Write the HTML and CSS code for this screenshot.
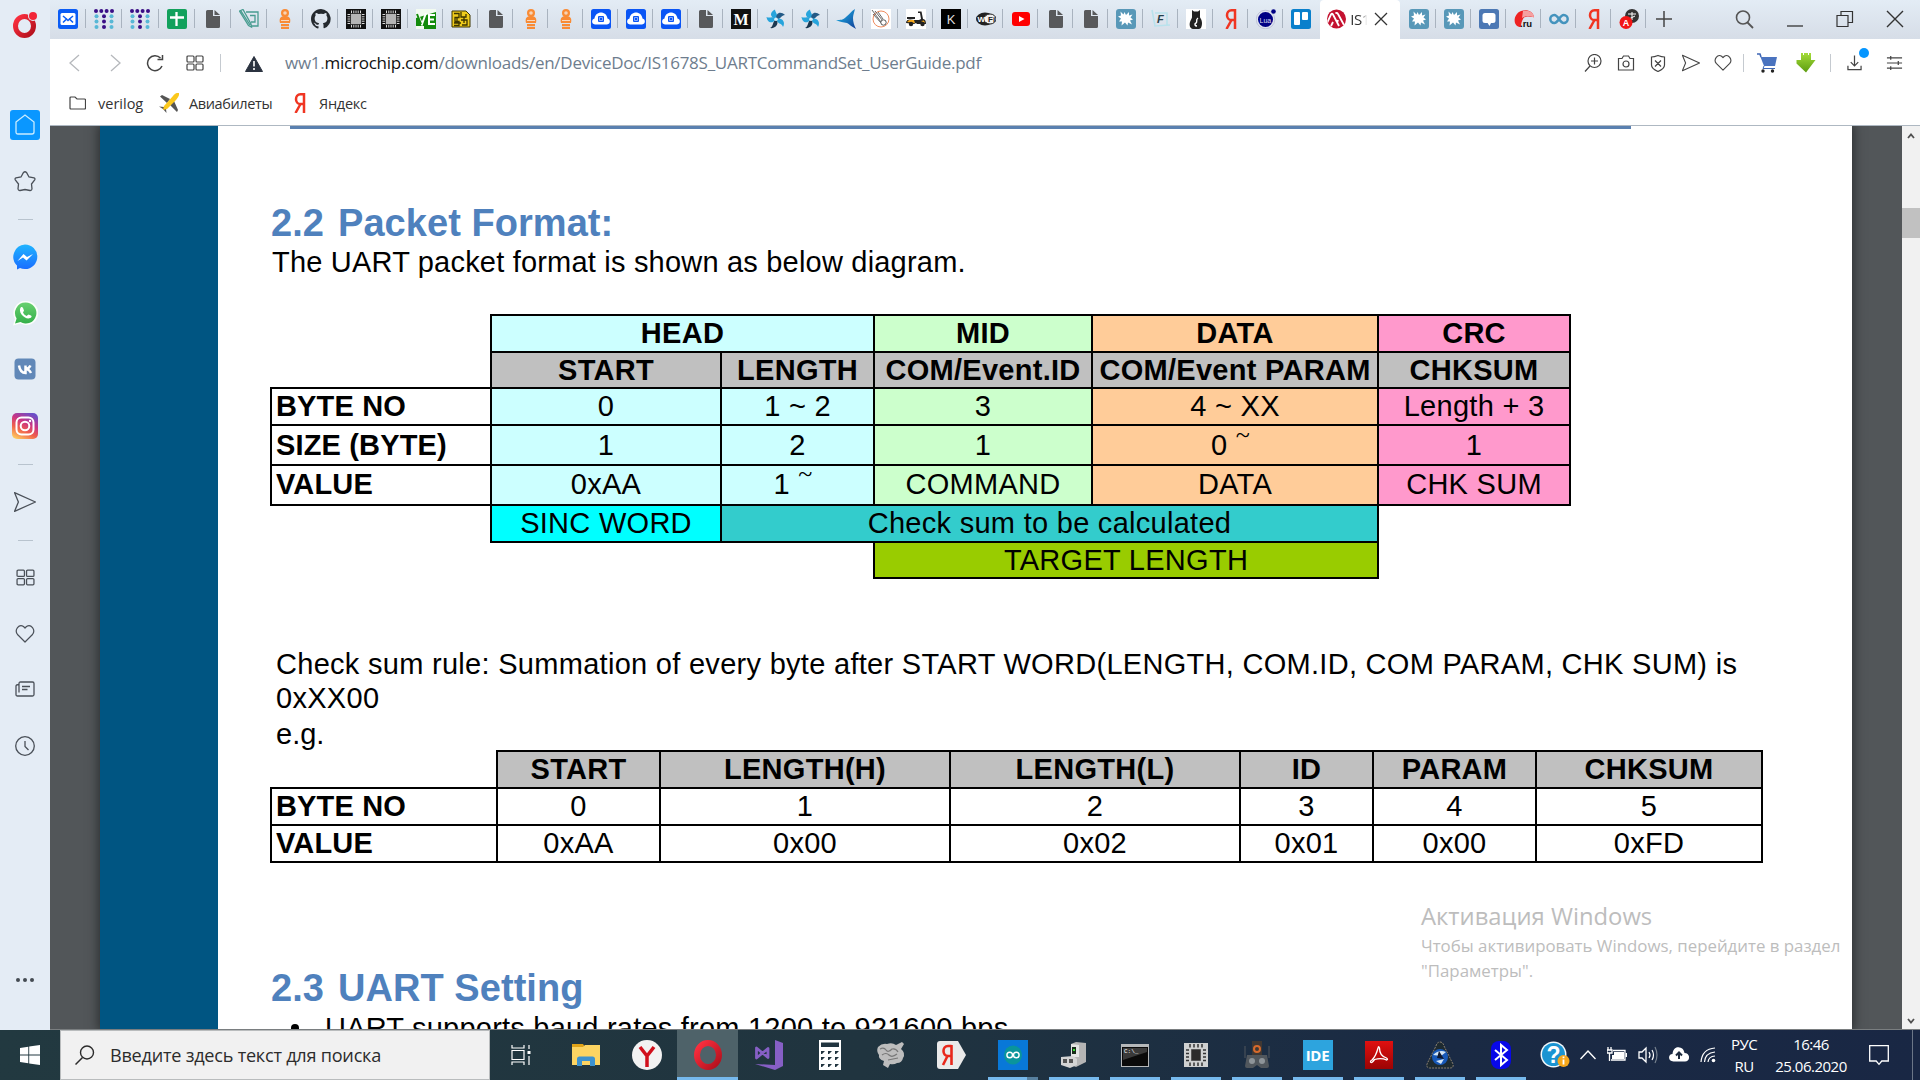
FILE: index.html
```html
<!DOCTYPE html>
<html lang="ru">
<head>
<meta charset="utf-8">
<title>IS1678S_UARTCommandSet_UserGuide.pdf</title>
<link rel="stylesheet" href="styles.css">
</head>
<body>
<svg class="paints" aria-hidden="true">
<defs>
<linearGradient id="g-opera" x1="0" y1="0" x2="1" y2="1"><stop offset="0" stop-color="#ff3040"/><stop offset="1" stop-color="#b0101c"/></linearGradient>
<linearGradient id="g-msg" x1="0" y1="0" x2="0" y2="1"><stop offset="0" stop-color="#1fb4ff"/><stop offset="1" stop-color="#1a6dff"/></linearGradient>
<linearGradient id="g-wa" x1="0" y1="0" x2="0" y2="1"><stop offset="0" stop-color="#68d070"/><stop offset="1" stop-color="#34b04a"/></linearGradient>
<linearGradient id="g-ig" x1=".2" y1="1" x2=".7" y2="0"><stop offset="0" stop-color="#fdc860"/><stop offset=".35" stop-color="#f0604a"/><stop offset=".65" stop-color="#c93485"/><stop offset="1" stop-color="#6a4fc8"/></linearGradient>
<linearGradient id="g-green" x1="0" y1="0" x2="0" y2="1"><stop offset="0" stop-color="#a4dc38"/><stop offset="1" stop-color="#5c9c10"/></linearGradient>
<linearGradient id="g-pdf" x1="0" y1="0" x2="0" y2="1"><stop offset="0" stop-color="#e01010"/><stop offset="1" stop-color="#9c0404"/></linearGradient>
<linearGradient id="g-blade" x1="0" y1="0" x2="1" y2="1"><stop offset="0" stop-color="#1cc0f0"/><stop offset="1" stop-color="#123c96"/></linearGradient>
<clipPath id="c-mchip"><circle cx="9.500" cy="10" r="9.500"/></clipPath>
</defs>
</svg>
<svg class="sprite" aria-hidden="true">
<symbol id="mail" viewBox="0 0 20 20"><rect width="20" height="20" rx="2.5" fill="#0a5cf5"/><rect x="2.5" y="4" width="15" height="12" rx="1.5" fill="#fff"/><path d="M5 7l3.500 3L5 13.500M15 7l-3.500 3 3.500 3.500M8 9.500l2 2 2-2" fill="none" stroke="#0a5cf5" stroke-width="1.500"/></symbol>
<symbol id="dots" viewBox="0 0 20 20"><g fill="#3a0e86"><circle cx="2" cy="2" r="2"/><circle cx="7.300" cy="2" r="2"/><circle cx="12.600" cy="2" r="2"/><circle cx="18" cy="2" r="2"/><circle cx="10" cy="7.300" r="2"/><circle cx="10" cy="12.600" r="2"/><circle cx="10" cy="18" r="2"/></g><g fill="#58b8d6"><circle cx="2.500" cy="7.300" r="2"/><circle cx="2.500" cy="12.600" r="2"/><circle cx="2.500" cy="18" r="2"/><circle cx="17.500" cy="7.300" r="2"/><circle cx="17.500" cy="12.600" r="2"/><circle cx="17.500" cy="18" r="2"/></g></symbol>
<symbol id="sheet" viewBox="0 0 20 20"><rect width="20" height="20" rx="2" fill="#12a15c"/><path d="M3 8.500h14M9.500 3v14" stroke="#fff" stroke-width="2.300"/></symbol>
<symbol id="file" viewBox="0 0 20 20"><path d="M3 2.500Q3 1 4.500 1H10v6h7v10.500q0 1.500-1.500 1.500h-11Q3 19 3 17.500z" fill="#58595b"/><path d="M11.500 1l5.500 5h-5.500z" fill="#58595b"/></symbol>
<symbol id="pcb" viewBox="0 0 20 20"><path d="M.5 2l3.500-1.500 8 14.500.5 3-3-1.500zM7 3h12v14H12M11 6.500h5v6.500h-4M2 2l9 14" fill="none" stroke="#479c90" stroke-width="1.300"/></symbol>
<symbol id="doll" viewBox="0 0 20 20"><circle cx="10" cy="4" r="4" fill="#f98b35"/><path d="M10 7c5 0 6 3 5 7H5c-1-4 0-7 5-7zM6 15h8v2.300H6zM6 18h8v2H6z" fill="#f98b35"/><circle cx="10" cy="4" r="1.800" fill="#f8d3b4"/><path d="M6 11.500h8" stroke="#fbd9bd"/></symbol>
<symbol id="github" viewBox="0 0 16 16"><path fill="#24292e" d="M8 0C3.580 0 0 3.580 0 8c0 3.540 2.290 6.530 5.470 7.590.4.070.55-.17.55-.38v-1.490C3.800 14.200 3.330 12.640 3.330 12.640c-.36-.92-.89-1.170-.89-1.170-.73-.5.060-.49.060-.49.8.060 1.230.82 1.230.82.71 1.220 1.870.87 2.330.66.070-.52.280-.87.500-1.070-1.770-.2-3.640-.89-3.640-3.950 0-.87.310-1.590.82-2.150-.08-.2-.36-1.020.080-2.120 0 0 .67-.21 2.200.82a7.600 7.600 0 014 0c1.530-1.040 2.200-.82 2.200-.82.44 1.100.16 1.920.080 2.120.51.560.82 1.270.82 2.150 0 3.070-1.870 3.750-3.650 3.950.29.250.54.73.54 1.480v2.220c0 .21.150.46.550.38A8 8 0 008 0z"/></symbol>
<symbol id="chip" viewBox="0 0 20 20"><rect width="20" height="20" fill="#111"/><path d="M5.500 1.500v17M7.800 1.500v17M10 1.500v17M12.200 1.500v17M14.500 1.500v17M1.500 5.500h17M1.500 7.800h17M1.500 10h17M1.500 12.200h17M1.500 14.500h17" stroke="#ddd" stroke-width="1"/><rect x="4.500" y="4.500" width="11" height="11" fill="#b5b5b5" stroke="#222" stroke-width=".8"/></symbol>
<symbol id="ve" viewBox="0 0 20 20"><rect width="20" height="20" fill="#138b0c"/><path d="M0 0h20v3L10 6 0 9zM0 17h8v3H0z" fill="#f2fbf0"/><path d="M2 6l4 9 4-11M19 6h-6v9h6M13 10.500h5" stroke="#fff" stroke-width="2" fill="none"/><path d="M1 5l4 10" stroke="#138b0c" stroke-width="2" fill="none"/></symbol>
<symbol id="yel" viewBox="0 0 20 20"><path d="M1 2h14l4 4v12H1z" fill="#f0cc1c" stroke="#3d3500"/><path d="M3 4.500h5v4H4v4h4v4H3M10 3v5h5V5M10 11h6v5h-5M6 8v6M13 8v6M3 14h7" stroke="#3d3500" fill="none" stroke-width="1.300"/></symbol>
<symbol id="cloudb" viewBox="0 0 20 20"><rect width="20" height="20" rx="2.500" fill="#0a55f5"/><path d="M4 15.500c-4-.5-3.500-5.500-.5-6C4 5 8 3.500 10 3.500S16 5 16.500 9.500c3 .5 3.500 5.500-.5 6z" fill="#fff"/><rect x="7" y="7" width="6" height="6" rx="1" fill="#0a55f5"/><path d="M8.500 8.500h3v3h-3z" stroke="#bcd0ff" fill="none" stroke-width=".7"/></symbol>
<symbol id="med" viewBox="0 0 20 20"><rect width="20" height="20" fill="#111"/><text x="10" y="15.500" text-anchor="middle" font-family="Liberation Serif" font-weight="bold" font-size="16" fill="#fff">M</text></symbol>
<symbol id="swirl" viewBox="0 0 20 20"><g fill="#27a4dc"><path d="M10 10C3 8 4 3 9 .5c0 3 4 5 1 9.500z"/><path d="M10 10c0-7 5-8 9-4-4 0-4 5-9 4z" fill="#245a86"/><path d="M10 10c6-2 10 3 7 8-1-4-6-3-7-8z"/><path d="M10 10c4 5-1 10-6 9 4-2 2-6 6-9z" fill="#1b3850"/><path d="M10 10c-4 6-9 3-9.500-2 4 2 5-2 9.500 2z"/></g><circle cx="10" cy="10.200" r="1.800" fill="#d8edf7"/></symbol>
<symbol id="blade" viewBox="0 0 20 20"><path d="M19 0c-1 4-2 6-2 9 0 4 1 7 3 11-4-2-7-5-9-6-4-1-7-1-11-3 5 0 7 0 10-3 4-3 5-6 9-8z" fill="url(#g-blade)"/></symbol>
<symbol id="sketch" viewBox="0 0 20 20"><rect width="20" height="20" fill="#fff"/><circle cx="10" cy="10" r="8" fill="none" stroke="#ef8d60"/><path d="M1 1l9 12M4 2l8 10M7 3l5 7M2 5l9 10" stroke="#555" stroke-width=".9"/><circle cx="12.500" cy="13.500" r="2.700" fill="#fff" stroke="#555"/></symbol>
<symbol id="scoot" viewBox="0 0 20 20"><rect width="20" height="20" fill="#fff"/><path d="M1 8h8v2H1zM0 14c0-4 4-4 8-3h5l2-1-1-6h-2V2.500h3.500L17 10c3 0 3 4 3 5h-9l-1-1-2 1z" fill="#222"/><path d="M1 13l2-2h5l1 3zM15 12l3-.5 1 2.500z" fill="#f5a81c"/><circle cx="5" cy="15" r="2.200" fill="#222"/><circle cx="16.500" cy="15" r="2.200" fill="#222"/></symbol>
<symbol id="kk" viewBox="0 0 20 20"><rect width="20" height="20" fill="#000"/><text x="10" y="14.500" text-anchor="middle" font-family="Liberation Sans" font-size="13" fill="#ddd">K</text></symbol>
<symbol id="wifi" viewBox="0 0 20 20"><ellipse cx="9" cy="10" rx="9" ry="6.500" fill="#222"/><ellipse cx="14" cy="10" rx="6" ry="5" fill="#eee" stroke="#222"/><text x="1.500" y="13" font-family="Liberation Sans" font-weight="bold" font-size="8" fill="#fff">Wi</text><text x="12" y="13" font-family="Liberation Sans" font-weight="bold" font-size="8" fill="#222">Fi</text></symbol>
<symbol id="yt" viewBox="0 0 20 20"><rect x="1" y="3" width="18" height="14" rx="3" fill="#f00"/><path d="M8 7v6l5.500-3z" fill="#fff"/></symbol>
<symbol id="splat" viewBox="0 0 20 20"><rect width="20" height="20" rx="3" fill="#5898b8"/><path d="M8.500 3l1.500 3 3-3v3.500l3.500-1-2 3 2.500 2-3 1 2 4-4-2-.5 3-2.500-3-3.500 3 .5-4-3 0 2-3-3-2 3-1-.5-4 3 3z" fill="#fff"/></symbol>
<symbol id="ff" viewBox="0 0 20 20"><path d="M1 1l3 16 15-1M4 4h12v12" fill="none" stroke="#b9e2ec" stroke-width="1.600"/><text x="6" y="13.500" font-family="Liberation Sans" font-weight="bold" font-style="italic" font-size="11" fill="#26404a">F</text></symbol>
<symbol id="cat" viewBox="0 0 20 20"><rect width="20" height="20" fill="#fff"/><path d="M6 1l2 1.500h4L14 1v6c-.5 2 2 3 2 7 0 3-1 6-3 6H7c-3 0-4-4-3-7 .5-2 2.500-4 2-6z" fill="#222"/><path d="M12 9c-3 2 0 4-2 5s-1 3 1 3" stroke="#fff" fill="none" stroke-width="1.400"/></symbol>
<symbol id="ya" viewBox="0 0 20 20"><path d="M14 0v20M14 1.300h-3.500C4.500 1.300 4.500 11 10.500 11H14M10.500 11L5.500 20" fill="none" stroke="#f03522" stroke-width="2.500"/></symbol>
<symbol id="lua" viewBox="0 0 20 20"><circle cx="9.500" cy="10.500" r="9.300" fill="#dfe3ef" stroke="#a5a9c4" stroke-width=".5"/><circle cx="9.500" cy="10.500" r="7.500" fill="#000084"/><circle cx="17.500" cy="2.500" r="2.300" fill="#000084"/><text x="3.500" y="14" font-family="Liberation Sans" font-size="7" fill="#dde">Lua</text></symbol>
<symbol id="trello" viewBox="0 0 20 20"><rect width="20" height="20" rx="2.500" fill="#0a80cc"/><rect x="3" y="3" width="6" height="13" rx="1" fill="#fff"/><rect x="11" y="3" width="6" height="8" rx="1" fill="#fff"/></symbol>
<symbol id="mchip" viewBox="0 0 20 20"><circle cx="9.500" cy="10" r="9.500" fill="#c41230"/><g clip-path="url(#c-mchip)" stroke="#fff" stroke-width="1.800" fill="none"><path d="M0 14L4 5.500Q5 4 6 5.500L12 17M8.500 4.500Q10 3 11 5L17 16M4 17l2-4M10 14l1-3"/></g></symbol>
<symbol id="chat" viewBox="0 0 20 20"><rect width="20" height="20" rx="2.500" fill="#4c78b4"/><rect x="3.500" y="4" width="13" height="10" rx="2.500" fill="#fff"/><path d="M8 13l2.500 4 2-4z" fill="#fff"/></symbol>
<symbol id="ru" viewBox="0 0 20 20"><path d="M7 18C-2 18-1 5 7 2c6-2 12 0 13 6-5-1-10-1-11 2-1 2-2 4-2 8z" fill="#e22"/><path d="M9 2c6-1 11 1 11 7-4-3-9-2-12 0z" fill="#f5a0a0"/><text x="6" y="18" font-family="Liberation Sans" font-weight="bold" font-size="9.500" fill="#111">.ru</text></symbol>
<symbol id="inf" viewBox="0 0 20 20"><path d="M10 10C8 7 7 6 5.300 6a4 4 0 000 8C7 14 8 13 10 10s3-4 4.700-4a4 4 0 010 8C13 14 12 13 10 10z" fill="none" stroke="#4493bd" stroke-width="2.500"/></symbol>
<symbol id="trans" viewBox="0 0 20 20"><circle cx="13" cy="7" r="7" fill="#333"/><path d="M9 5h8M13 3v8M10 10l6-3" stroke="#fff"/><circle cx="7" cy="13.500" r="6.500" fill="#f21515"/><text x="7" y="17" text-anchor="middle" font-family="Liberation Sans" font-weight="bold" font-size="9" fill="#fff">A</text></symbol>
<symbol id="grid4" viewBox="0 0 18 18"><g fill="none" stroke="currentColor" stroke-width="1.200"><rect x="1" y="2" width="7" height="6" rx="1"/><rect x="10" y="2" width="7" height="6" rx="1"/><rect x="1" y="10" width="7" height="6" rx="1"/><rect x="10" y="10" width="7" height="6" rx="1"/></g></symbol>
<symbol id="heart" viewBox="0 0 20 20"><path d="M10 18L2.500 10.500C-1 6 4-.5 8.500 2.500L10 4l1.500-1.500C16-.5 21 6 17.500 10.500z" fill="none" stroke="currentColor" stroke-width="1.200" stroke-linejoin="round"/></symbol>
<symbol id="send" viewBox="0 0 20 20"><path d="M0.500 1.500L19.500 10 0.500 18.500 4 10z" fill="none" stroke="currentColor" stroke-width="1.200" stroke-linejoin="round"/></symbol>
<symbol id="lens" viewBox="0 0 20 20"><circle cx="12" cy="7.500" r="6.500" fill="none" stroke="currentColor" stroke-width="1.400"/><path d="M7.500 12.500L.5 19.500" stroke="currentColor" stroke-width="1.500"/></symbol>
</svg>

<div class="screen">
<aside class="side">
  <div class="slot logo"><svg width="25" height="26" viewBox="0 0 25 26"><ellipse cx="11.500" cy="14" rx="9" ry="9.500" fill="none" stroke="url(#g-opera)" stroke-width="5"/><circle cx="20" cy="4" r="5" fill="#e4ecf5"/><circle cx="20" cy="4" r="4" fill="#f22537"/></svg></div>
  <div class="slot"><div class="home"><svg width="20" height="22" viewBox="0 0 20 22"><path d="M1 8L10 1l9 7v10q0 2-2 2H3q-2 0-2-2z" fill="none" stroke="#c9ecff" stroke-width="1.300"/></svg></div></div>
  <div class="slot"><svg width="22" height="21" viewBox="0 0 22 21"><path d="M9.500 1.500q1.500-1.500 3 0L15 6l5 .8q1.500.7.7 2L17.500 13l.5 5q-.3 1.700-2 1.500L11 18.500 6 19.500q-1.700.2-2-1.500l.5-5L1.300 8.800q-.8-1.300.7-2L7 6z" fill="none" stroke="currentColor" stroke-width="1.300"/></svg></div>
  <div class="rule"></div>
  <div class="slot"><svg width="26" height="26" viewBox="0 0 26 26"><path d="M13 .5a12.300 12.300 0 110 24.600q-3 0-5-1L5 25.500v-4A12.300 12.300 0 0113 .5z" fill="url(#g-msg)"/><path d="M5.500 17l6-7 3.500 3 6-3-6.500 6.500-3.500-3z" fill="#fff"/></svg></div>
  <div class="slot"><svg width="26" height="26" viewBox="0 0 26 26"><path d="M13.500 1a12 12 0 11-5 22.500L1 25.500l2-6.500A12 12 0 0113.500 1z" fill="#fbfefb"/><path d="M13.500 2.500a10.500 10.500 0 11-5 19.500L3 23.500l1.600-5A10.500 10.500 0 0113.500 2.500z" fill="url(#g-wa)"/><path d="M9 7c2-.5 2.500 2 3 3.500l-1 2c1 2 2 2.500 3.500 3.500l2-1.500c2 .5 3.500 1 3 2.500-4 5-15-4-10.500-10z" fill="#fff"/></svg></div>
  <div class="slot"><svg width="22" height="22" viewBox="0 0 22 22"><rect x=".5" y=".5" width="21" height="21" rx="4" fill="#6188b8"/><path d="M5 7.500c.8 5 3 7.500 6.500 7.500V7.500M11.500 11c3 0 4-1.500 5-3.500M11.500 11c3 0 4.500 2 5.500 4" fill="none" stroke="#fff" stroke-width="2.500"/></svg></div>
  <div class="slot"><svg width="26" height="26" viewBox="0 0 26 26"><rect width="26" height="26" rx="5" fill="url(#g-ig)"/><rect x="4.500" y="4.500" width="17" height="17" rx="5" fill="none" stroke="#fff" stroke-width="2"/><circle cx="13" cy="13" r="4.300" fill="none" stroke="#fff" stroke-width="2"/><circle cx="18" cy="8" r="1.200" fill="#fff"/></svg></div>
  <div class="rule"></div>
  <div class="slot"><svg width="22" height="22"><use href="#send"/></svg></div>
  <div class="rule"></div>
  <div class="slot"><svg width="19" height="19"><use href="#grid4"/></svg></div>
  <div class="slot"><svg width="20" height="20"><use href="#heart"/></svg></div>
  <div class="slot"><svg width="20" height="18" viewBox="0 0 20 18"><path d="M4 3v-.5Q4 1 5.500 1h12Q19 1 19 2.500v11q0 1.500-1.500 1.500h-15Q1 15 1 13.500V5q0-1.500 3-1.500v8M7 5.500h8M7 8.500h5.500" fill="none" stroke="currentColor" stroke-width="1.300"/></svg></div>
  <div class="slot"><svg width="20" height="20" viewBox="0 0 20 20"><circle cx="10" cy="10" r="9.300" fill="none" stroke="currentColor" stroke-width="1.300"/><path d="M10 5v5.500l3.500 3.500" fill="none" stroke="currentColor" stroke-width="1.300"/></svg></div>
  <div class="more"><i></i><i></i><i></i></div>
</aside>

<div class="main">
<header class="tabs">
  <div class="tab w"><svg><use href="#mail"/></svg></div><div class="tab w"><svg><use href="#dots"/></svg></div><div class="tab w"><svg><use href="#dots"/></svg></div><div class="tab w"><svg><use href="#sheet"/></svg></div><div class="tab w"><svg><use href="#file"/></svg></div><div class="tab w"><svg><use href="#pcb"/></svg></div><div class="tab w"><svg><use href="#doll"/></svg></div>
  <div class="tab"><svg><use href="#github"/></svg></div><div class="tab"><svg><use href="#chip"/></svg></div><div class="tab"><svg><use href="#chip"/></svg></div><div class="tab"><svg><use href="#ve"/></svg></div><div class="tab"><svg><use href="#yel"/></svg></div><div class="tab"><svg><use href="#file"/></svg></div><div class="tab"><svg><use href="#doll"/></svg></div><div class="tab"><svg><use href="#doll"/></svg></div><div class="tab"><svg><use href="#cloudb"/></svg></div><div class="tab"><svg><use href="#cloudb"/></svg></div><div class="tab"><svg><use href="#cloudb"/></svg></div><div class="tab"><svg><use href="#file"/></svg></div><div class="tab"><svg><use href="#med"/></svg></div><div class="tab"><svg><use href="#swirl"/></svg></div><div class="tab"><svg><use href="#swirl"/></svg></div><div class="tab"><svg><use href="#blade"/></svg></div><div class="tab"><svg><use href="#sketch"/></svg></div><div class="tab"><svg><use href="#scoot"/></svg></div><div class="tab"><svg><use href="#kk"/></svg></div><div class="tab"><svg><use href="#wifi"/></svg></div><div class="tab"><svg><use href="#yt"/></svg></div><div class="tab"><svg><use href="#file"/></svg></div><div class="tab"><svg><use href="#file"/></svg></div><div class="tab"><svg><use href="#splat"/></svg></div><div class="tab"><svg><use href="#ff"/></svg></div><div class="tab"><svg><use href="#cat"/></svg></div><div class="tab"><svg><use href="#ya"/></svg></div><div class="tab"><svg><use href="#lua"/></svg></div><div class="tab last"><svg><use href="#trello"/></svg></div>
  <div class="tab active"><svg><use href="#mchip"/></svg><span class="tab-title">IS1</span><svg class="x" viewBox="0 0 14 14"><path d="M1 1l12 12M13 1L1 13" stroke="#333" stroke-width="1.300"/></svg></div>
  <div class="tab"><svg><use href="#splat"/></svg></div><div class="tab"><svg><use href="#splat"/></svg></div><div class="tab"><svg><use href="#chat"/></svg></div><div class="tab"><svg><use href="#ru"/></svg></div><div class="tab"><svg><use href="#inf"/></svg></div><div class="tab"><svg><use href="#ya"/></svg></div><div class="tab"><svg><use href="#trans"/></svg></div>
  <div class="tab last"><svg class="plus" viewBox="0 0 16 16"><path d="M8 0v16M0 8h16" stroke="#444" stroke-width="1.500"/></svg></div>
  <div class="win">
    <svg width="19" height="19" viewBox="0 0 19 19"><circle cx="8" cy="7.500" r="6.500" fill="none" stroke="#555" stroke-width="1.600"/><path d="M12.500 12.500l5.500 5.500" stroke="#555" stroke-width="1.800"/></svg>
    <svg width="18" height="18" viewBox="0 0 18 18"><path d="M1 16h16" stroke="#333" stroke-width="1.300"/></svg>
    <svg width="18" height="18" viewBox="0 0 18 18"><path d="M1 5.500h11v11H1zM5 5.500v-4h11.500v11H12" fill="none" stroke="#333" stroke-width="1.200"/></svg>
    <svg width="18" height="18" viewBox="0 0 18 18"><path d="M1 1l16 16M17 1L1 17" stroke="#333" stroke-width="1.400"/></svg>
  </div>
</header>

<div class="toolbar">
  <div class="nav">
    <svg class="pale" viewBox="0 0 18 18"><path d="M13 1L4 9l9 8" fill="none" stroke="currentColor" stroke-width="1.300"/></svg>
    <svg class="pale" viewBox="0 0 18 18"><path d="M5 1l9 8-9 8" fill="none" stroke="currentColor" stroke-width="1.300"/></svg>
    <svg viewBox="0 0 18 18"><path d="M16 12A7.500 7.500 0 1114.500 4M16.500 1v4.500h-5" fill="none" stroke="currentColor" stroke-width="1.500"/></svg>
    <svg viewBox="0 0 18 18"><use href="#grid4"/></svg>
  </div>
  <i class="vr first"></i>
  <svg class="warn" viewBox="0 0 18 16"><path d="M9 .5L17.500 15.500H.5z" fill="#2b3340" stroke="#2b3340" stroke-linejoin="round"/><path d="M9 5v5.500M9 12v2" stroke="#fff" stroke-width="1.600"/></svg>
  <div class="url">ww1.<b>microchip.com</b>/downloads/en/DeviceDoc/IS1678S_UARTCommandSet_UserGuide.pdf</div>
  <div class="tools">
    <svg viewBox="0 0 18 18"><circle cx="10.500" cy="7" r="6.500" fill="none" stroke="currentColor" stroke-width="1.200"/><path d="M6 12L1 17.500M7 7h7M10.500 3.500v7" stroke="currentColor" stroke-width="1.200"/></svg>
    <svg viewBox="0 0 18 18"><path d="M1.500 4.500H5L6.500 2h5L13 4.500h3.500v11.500h-15z" fill="none" stroke="currentColor" stroke-width="1.200"/><circle cx="9" cy="10" r="3" fill="none" stroke="currentColor" stroke-width="1.200"/></svg>
    <svg viewBox="0 0 18 18"><path d="M9 1.500c2.500 1 4 1.500 6.500 1.500v8c0 3-3 5-6.500 6.500C5.500 16 2.500 14 2.500 11V3C5 3 6.500 2.500 9 1.500zM6 6.500l6 6M12 6.500l-6 6" fill="none" stroke="currentColor" stroke-width="1.200"/></svg>
    <svg viewBox="0 0 18 18"><use href="#send"/></svg>
    <svg viewBox="0 0 18 18"><use href="#heart"/></svg>
  </div>
  <i class="vr"></i>
  <svg class="cart" viewBox="0 0 20 20"><path d="M0 1h3l1 3" stroke="#3f67b5" fill="none" stroke-width="1.600"/><path d="M3.500 4H20l-2 9H7z" fill="#4a73bf"/><path d="M7 13l-1 2.500h12" stroke="#3f67b5" fill="none"/><circle cx="6" cy="18" r="1.700" fill="#222"/><circle cx="15.500" cy="18" r="1.700" fill="#222"/></svg>
  <svg class="green" viewBox="0 0 20 20"><path d="M5 0h2v2h1V0h4v2h1V0h2v7h4.500L10 19.500.5 10.500V7H5z" fill="url(#g-green)"/></svg>
  <i class="vr"></i>
  <div class="dl"><svg viewBox="0 0 16 16"><path d="M8 0v11M4 7l4 4 4-4M1 11v4h14v-4" fill="none" stroke="#444" stroke-width="1.300"/></svg><i></i></div>
  <svg class="set" viewBox="0 0 18 16"><path d="M1 2.500h16M1 8h16M1 13.500h16M5 .5v4M13 6v4M5 11.500v4M9 0" stroke="#444" stroke-width="1.300"/></svg>
</div>
<div class="marks">
  <svg class="folder" viewBox="0 0 17 14"><path d="M1 2Q1 1 2 1h4l2 2h7.500q1 0 1 1v8q0 1-1 1H2q-1 0-1-1z" fill="none" stroke="#444" stroke-width="1.200"/></svg><span class="m1">verilog</span>
  <svg class="ic" viewBox="0 0 20 20"><path d="M1 3.500L3 2l8 4-3 4zM18 19l1-2-4-9-4 4zM0 13.500l5 .5 2 2 .5 4L4 16z" fill="#555"/><path d="M20 0c-2-.5-4 .5-6 3L5 13l-1 4 4-1 9-9c2.500-3 3.500-5 3-7z" fill="#fbc81c"/></svg><span class="m2">Авиабилеты</span>
  <svg class="ic" viewBox="0 0 20 20"><use href="#ya"/></svg><span class="m3">Яндекс</span>
</div>

<main class="viewer">
  <div class="page">
    <div class="band"></div>
    <div class="doc">
      <div class="topline"></div>
      <h2 class="h22"><span>2.2</span>Packet Format:</h2>
      <p class="intro">The UART packet format is shown as below diagram.</p>
      <table class="t1">
        <colgroup><col class="a0"><col class="a1"><col class="a2"><col class="a3"><col class="a4"><col class="a5"></colgroup>
        <tr class="r37"><td class="none"></td><th class="cy" colspan="2">HEAD</th><th class="gr">MID</th><th class="or">DATA</th><th class="pk">CRC</th></tr>
        <tr class="r36 hd"><td class="none"></td><th>START</th><th>LENGTH</th><th>COM/Event.ID</th><th>COM/Event PARAM</th><th>CHKSUM</th></tr>
        <tr class="r37"><th class="lab">BYTE NO</th><td class="cy">0</td><td class="cy">1 ~ 2</td><td class="gr">3</td><td class="or">4 ~ XX</td><td class="pk">Length + 3</td></tr>
        <tr class="r40"><th class="lab">SIZE (BYTE)</th><td class="cy">1</td><td class="cy">2</td><td class="gr">1</td><td class="or open">0 <span class="tl">~</span></td><td class="pk">1</td></tr>
        <tr class="r40 up"><th class="lab">VALUE</th><td class="cy">0xAA</td><td class="cy open">1 <span class="tl">~</span></td><td class="gr">COMMAND</td><td class="or">DATA</td><td class="pk">CHK SUM</td></tr>
        <tr class="r37"><td class="none"></td><td class="aqua">SINC WORD</td><td class="teal" colspan="3">Check sum to be calculated</td><td class="none"></td></tr>
        <tr class="r36"><td class="none" colspan="3"></td><td class="lime" colspan="2">TARGET LENGTH</td><td class="none"></td></tr>
      </table>
      <p class="rule1">Check sum rule: Summation of every byte after START WORD(LENGTH, COM.ID, COM PARAM, CHK SUM) is<br>0xXX00</p>
      <p class="eg">e.g.</p>
      <table class="t2">
        <colgroup><col class="b0"><col class="b1"><col class="b2"><col class="b2"><col class="b3"><col class="b4"><col class="b5"></colgroup>
        <tr class="r37 hd"><td class="none"></td><th>START</th><th>LENGTH(H)</th><th>LENGTH(L)</th><th>ID</th><th>PARAM</th><th>CHKSUM</th></tr>
        <tr class="r37"><th class="lab">BYTE NO</th><td>0</td><td>1</td><td>2</td><td>3</td><td>4</td><td>5</td></tr>
        <tr class="r37"><th class="lab">VALUE</th><td>0xAA</td><td>0x00</td><td>0x02</td><td>0x01</td><td>0x00</td><td>0xFD</td></tr>
      </table>
      <h2 class="h23"><span>2.3</span>UART Setting</h2>
      <p class="li"><i></i>UART supports baud rates from 1200 to 921600 bps</p>
    </div>
  </div>
  <div class="scroll">
    <svg viewBox="0 0 8 6"><path d="M1 5l3-3.500L7 5" fill="none" stroke="#505050" stroke-width="1.800"/></svg>
    <div class="thumb"></div>
    <svg viewBox="0 0 8 6"><path d="M1 1l3 3.500L7 1" fill="none" stroke="#505050" stroke-width="1.800"/></svg>
  </div>
  <div class="watermark"><div class="wm1">Активация Windows</div><div class="wm2">Чтобы активировать Windows, перейдите в раздел</div><div class="wm3">"Параметры".</div></div>
</main>
</div>

<footer class="task">
  <div class="start"><svg width="20" height="20" viewBox="0 0 20 20"><path d="M0 3l8.300-1.200V9.500H0zM9.200 1.600L20 0v9.500H9.200zM0 10.500h8.300v7.800L0 17zM9.200 10.500H20V20L9.200 18.400z" fill="#fff"/></svg></div>
  <div class="search"><svg width="20" height="20"><use href="#lens"/></svg><span>Введите здесь текст для поиска</span></div>
  <div class="app tv"><svg width="21" height="20" viewBox="0 0 21 20"><path d="M1 0v3h12V0M1 20v-3h12v3M1 5.500h12v9H1zM18 0v4M18 11v9" fill="none" stroke="#fff" stroke-width="1.200"/><path d="M16.500 6h3v3h-3z" fill="#fff"/></svg></div>
  <div class="app"><svg width="28" height="24" viewBox="0 0 28 24"><path d="M0 1h11l2 3H0z" fill="#e0a318"/><path d="M0 4h11l2-2h15v20H0z" fill="#fcd462"/><path d="M5 23v-7q0-2.500 2.500-2.500h13Q23 13.500 23 16v7h-5v-5h-8v5z" fill="#3d92cf"/></svg></div>
  <div class="app"><svg width="30" height="30" viewBox="0 0 30 30"><circle cx="15" cy="15" r="15" fill="#f2f2f2"/><path d="M8 7l7 9 7-9M15 15v12" fill="none" stroke="#d1101c" stroke-width="3.500"/></svg></div>
  <div class="app on run"><svg width="30" height="30" viewBox="0 0 30 30"><ellipse cx="15" cy="15" rx="11" ry="12" fill="none" stroke="url(#g-opera)" stroke-width="6"/></svg></div>
  <div class="app"><svg width="30" height="30" viewBox="0 0 30 30"><path d="M21 0l8 3v23l-8 4L1 24l20 1z" fill="#865fc5"/><path d="M2.500 8v10L14 8.500v9z" fill="none" stroke="#865fc5" stroke-width="2.800" stroke-linejoin="round"/></svg></div>
  <div class="app"><svg width="22" height="30" viewBox="0 0 22 30"><path d="M0 0h22v30H0z" fill="#fff"/><path d="M2 2.500h18v4.500H2z" fill="#21343f"/><g fill="#21343f"><path d="M2 11h4l-3 3H2zM9 11h4l-3 3H9zM16 11h4l-3 3h-1zM2 17h4l-3 3H2zM9 17h4l-3 3H9zM16 17h4l-3 3h-1zM2 24h4l-3 3H2zM9 24h4l-3 3H9zM16 24h4l-3 3h-1z"/></g></svg></div>
  <div class="app"><svg width="30" height="26" viewBox="0 0 30 26"><path d="M2 5q4-4 9-3 5-2 9 1l6-3 2 2-3 5q5 4 2 9-1 5-6 5-3 2-7 1l-2 4-5-3 1-4Q2 17 3 13 0 9 2 5z" fill="#bdbdbd"/><path d="M4 7q4-2 6 1t6-1q4-1 6 3M6 13q4-3 7 0t8-1M12 18l10-2" fill="none" stroke="#777" stroke-width="1.200"/></svg></div>
  <div class="app"><svg width="29" height="28" viewBox="0 0 29 28"><path d="M3 0h18l8 14-8 14H3q-3 0-3-3V3q0-3 3-3z" fill="#eaeaea"/><path d="M14.500 4v20M14.500 5H11c-6 0-6 10 0 10h3.500M10.500 15L6 24" fill="none" stroke="#e8281c" stroke-width="2.600"/></svg></div>
  <div class="app run multi"><svg width="30" height="30" viewBox="0 0 30 30"><path d="M0 0h30v30H0z" fill="#0878d8"/><ellipse cx="15" cy="15" rx="9" ry="9.500" fill="#0a959c"/><circle cx="11.700" cy="15" r="2.800" fill="none" stroke="#fff" stroke-width="1.400"/><circle cx="18.300" cy="15" r="2.800" fill="none" stroke="#fff" stroke-width="1.400"/></svg></div>
  <div class="app run"><svg width="28" height="26" viewBox="0 0 28 26"><path d="M11 2l5-2 10 1v19l-10 5-5-2z" fill="#b5b5b5"/><path d="M11 2l8 1v12h-8z" fill="#e4e4e4"/><path d="M12 5h4v7h-4z" fill="#182c18"/><path d="M13 7h2v2h-2z" fill="#38e038"/><path d="M1 15l12-1 4 3v6l-7 3-9-3z" fill="#d4d4d4"/><path d="M3 17h4v4H3zM9 17h4v4H9z" fill="#555"/></svg></div>
  <div class="app run"><svg width="28" height="23" viewBox="0 0 28 23"><path d="M0 0h28v23H0z" fill="#b5b8ba"/><path d="M1 3h26v19H1z" fill="#0a0a0a"/><path d="M2 4h24v4L2 16z" fill="#3a3a3a"/><text x="3" y="9" font-family="Liberation Mono" font-size="6" fill="#fff">C:\_</text></svg></div>
  <div class="app run"><svg width="24" height="24" viewBox="0 0 24 24"><path d="M0 0h24v24H0z" fill="#cfd1d1"/><path d="M7.500 6.500h9v11h-9z" fill="#2c2c2c" stroke="#555"/><path d="M6 1v3.500M10 1v3.500M14 1v3.500M18 1v3.500M6 19.500v3.500M10 19.500v3.500M14 19.500v3.500M18 19.500v3.500M2 7h3M2 10.500h3M2 14h3M2 17.500h3M19 7h3M19 10.500h3M19 14h3M19 17.500h3" stroke="#333" stroke-width="1.500"/></svg></div>
  <div class="app run"><svg width="26" height="28" viewBox="0 0 26 28"><path d="M8 0h10v14H8z" fill="#403833"/><circle cx="13" cy="8" r="3" fill="none" stroke="#d76a2c" stroke-width="2"/><path d="M1 5v12M25 5v12" stroke="#51575d"/><path d="M3 14h20l2 11q0 2-2 2h-6l-4-3-4 3H3q-2 0-2-2z" fill="#51575d"/><circle cx="8" cy="20" r="3" fill="#8e9499"/><circle cx="18" cy="20" r="3" fill="#8e9499"/></svg></div>
  <div class="app run"><div class="ide">IDE</div></div>
  <div class="app run"><svg width="28" height="28" viewBox="0 0 28 28"><path d="M0 0h28v28H0z" fill="url(#g-pdf)"/><path d="M6 21.500q-1.500-1 1-2.500 4-4 6-12 .5-2.500 1.500 0 0 8 7 10 2 1.500 0 2-5-2.500-12-.5-2.500 3.500-3.500 3z" fill="none" stroke="#fff" stroke-width="1.300"/></svg></div>
  <div class="app run"><svg width="28" height="28" viewBox="0 0 28 28"><path d="M14 1q3 0 4 4l9 18q1 4-3 4H4q-4 0-3-4L10 5q1-4 4-4z" fill="#1e2a30" stroke="#8b8172" stroke-dasharray="2 1"/><circle cx="14" cy="16" r="8" fill="#1758b8"/><path d="M7 14q6-6 13-3l-5 4zM10 20l8-2-3 5z" fill="#d2e4f5"/><path d="M13 10l5 8-7-1z" fill="#111a30"/></svg></div>
  <div class="app run"><svg width="20" height="28" viewBox="0 0 20 28"><rect width="20" height="28" rx="8" fill="#0808e8"/><path d="M4 9l12 10-6 5V4l6 5L4 19" fill="none" stroke="#fff" stroke-width="2"/></svg></div>
  <div class="tray">
    <svg class="help" width="30" height="28" viewBox="0 0 30 28"><circle cx="13.500" cy="13.500" r="13" fill="#f4f9fc"/><circle cx="13.500" cy="13.500" r="11.500" fill="#1b94d2"/><text x="13.500" y="22" text-anchor="middle" font-family="Liberation Sans" font-weight="bold" font-size="23" fill="#fff">?</text><circle cx="23.500" cy="20" r="6" fill="#f6a71c"/><path d="M23.500 18.500v5M23.500 15.500v1.800" stroke="#fff" stroke-width="1.800"/></svg>
    <svg width="16" height="16" viewBox="0 0 16 16"><path d="M.5 12L8 4l7.500 8" fill="none" stroke="#fff" stroke-width="1.400"/></svg>
    <svg width="20" height="16" viewBox="0 0 20 16"><path d="M1 0v3M4 0v3M0 3h5v3H0zM2.500 6v8M6 3.500h12v9.500H4M19.500 6v4" fill="none" stroke="#fff" stroke-width="1.300"/><path d="M7 5h10v7H5V8h2z" fill="#fff"/></svg>
    <svg width="20" height="18" viewBox="0 0 20 18"><path d="M1 6h3l4-4v14l-4-4H1z" fill="none" stroke="#fff" stroke-width="1.300"/><path d="M11 6q2 3 0 6M14 4q3 5 0 10" fill="none" stroke="#fff" stroke-width="1.200"/><path d="M17 1q4 8 0 16" fill="none" stroke="#77828f" stroke-width="1.200"/></svg>
    <svg width="20" height="16" viewBox="0 0 20 16"><path d="M4.500 14.500C-1.500 14-1 7 3.500 7 4 2 7-.5 10.500.5 14 1 15 3.500 15.500 6c6 0 6 8.500.5 8.500z" fill="#fff"/><path d="M10 12V6M7 8.500L10 5.500l3 3" fill="none" stroke="#1d2b3f" stroke-width="2"/></svg>
    <svg width="16" height="16" viewBox="0 0 16 16"><g fill="none" stroke="#fff" stroke-width="1.200"><path d="M1 15Q2 2 15 1M4.500 15Q5 6 15 5M8 15q.5-5.500 7-6"/></g><circle cx="13.500" cy="13.500" r="1.800" fill="#fff"/></svg>
    <div class="lang">РУС<br>RU</div>
    <div class="clock">16:46<br>25.06.2020</div>
    <svg class="note" width="20" height="21" viewBox="0 0 20 21"><path d="M.7.700h18.600v15.300h-6.500L10 19.300 7.200 16H.7z" fill="none" stroke="#fff" stroke-width="1.300"/></svg>
    <i class="peek"></i>
  </div>
</footer>
</div>
</body>
</html>
```
FILE: styles.css
```css
* { box-sizing: border-box; }
html, body { margin: 0; }
body { width: 1920px; height: 1080px; overflow: hidden; font-family: "Open Sans", "Noto Sans", sans-serif; }
svg { display: block; flex: none; }
p, h2 { margin: 0; }
.paints { position: absolute; width: 0; height: 0; }
.sprite { display: none; }
.screen { display: grid; grid-template: 1030px 50px / 50px 1870px; }

/* sidebar */
.side { background: #e4ecf5; display: flex; flex-direction: column; color: #4a5058; }
.slot { height: 56.100px; display: flex; align-items: center; justify-content: center; flex: none; }
.slot.logo { height: 97px; align-items: flex-start; padding-top: 12px; }
.home { width: 30px; height: 30px; border-radius: 3px; background: #0a97ff; display: flex; align-items: center; justify-content: center; }
.rule { width: 15px; height: 1px; margin: 10px 0 9px 18px; background: #b8c3ce; flex: none; }
.more { margin: auto 0 48px; display: flex; gap: 3px; justify-content: center; }
.more i { width: 4px; height: 4px; border-radius: 50%; background: #444b52; }

/* tab strip */
.main { display: flex; flex-direction: column; min-width: 0; }
.tabs { height: 39px; flex: none; display: flex; background: linear-gradient(#e3ecf5, #d6dde7); }
.tab { width: 35px; flex: none; display: flex; align-items: center; justify-content: center; background: linear-gradient(#a9b3bf, #a9b3bf) right 9px / 1px 19px no-repeat; padding-bottom: 1px; }
.tab.w { width: 36.200px; }
.tab svg { width: 20px; height: 20px; }
.tab.last { background: none; }
.tab .plus { width: 16px; height: 16px; }
.tab.active { width: 80px; margin: 0 1px 0 2px; background: #fff; border-radius: 4px 4px 0 0; justify-content: flex-start; padding-left: 7px; }
.tab-title { width: 17px; overflow: hidden; font-size: 15px; margin: 0 7px 0 3px; color: #333; white-space: nowrap; line-height: 21px; -webkit-mask: linear-gradient(90deg, #000 65%, transparent); letter-spacing: -0.500px; }
.tab .x { width: 14px; height: 14px; }
.win { margin-left: auto; display: flex; gap: 32px; align-items: center; padding-right: 16px; padding-bottom: 1px; }

/* address bar */
.toolbar { height: 47px; flex: none; background: #fff; display: flex; align-items: center; color: #444; padding-left: 16px; }
.nav { display: flex; gap: 22px; width: 140px; }
.nav svg, .tools svg { width: 18px; height: 18px; }
.nav .pale { color: #b5b8bc; }
.vr { width: 1px; height: 18px; background: #c5cad0; }
.vr.first { margin-left: 14px; }
.warn { width: 18px; height: 16px; margin: 3px 22px 0 24px; }
.url { width: 1299px; font-size: 17px; line-height: 24px; letter-spacing: -0.250px; color: #6e7d8e; white-space: nowrap; }
.url b { font-weight: 400; color: #111; }
.tools { display: flex; gap: 14.500px; margin-right: 11px; }
.cart { width: 20px; height: 20px; margin: 0 19px 0 13px; }
.green { width: 20px; height: 20px; margin-right: 14px; }
.dl { position: relative; margin-left: 16px; }
.dl svg { width: 15px; height: 16px; }
.dl i { position: absolute; left: 12px; top: -7px; width: 10px; height: 10px; border-radius: 50%; background: #0596ff; }
.set { width: 17px; height: 16px; margin-left: 24px; }
.marks { height: 40px; flex: none; background: #fff; border-bottom: 1px solid #aeb8c2; display: flex; align-items: center; padding: 0 0 5px 19px; font-size: 14.500px; color: #333; white-space: nowrap; }
.folder { width: 17px; height: 14px; }
.m1 { width: 50px; margin-left: 12px; }
.m2 { width: 101px; margin-left: 10px; letter-spacing: -0.380px; }
.m3 { margin-left: 9px; letter-spacing: -0.250px; }
.ic { width: 20px; height: 20px; margin-left: 11px; }
.m2 + .ic { margin-left: 0; }

/* pdf viewer */
.viewer { position: relative; flex: 1; display: flex; background: #525659; min-height: 0; overflow: hidden; border-bottom: 1px solid #7a7e80; padding-left: 50px; }
.page { width: 1752px; display: flex; background: #fff; box-shadow: 0 0 10px 2px #2d3032; margin-right: 50px; flex: none; }
.band { width: 118px; background: #005582; margin-right: 1px; }
.doc { width: 1633px; padding-left: 52px; font: 29px/34px "Liberation Sans", Arial, sans-serif; color: #000; }
.topline { width: 1341px; height: 3px; margin-left: 19px; background: #5a80b0; }
.doc h2 { font-size: 38px; line-height: 44px; color: #4f81bd; white-space: nowrap; display: flex; letter-spacing: 0.050px; }
.doc h2 span { width: 67px; }
.h22 { margin-top: 72px; }
.intro { margin: 0 0 0 1px; letter-spacing: 0.200px; }
.t1, .t2 { border-collapse: collapse; table-layout: fixed; margin-left: -1px; }
.t1 { width: 1301px; margin-top: 35px; }
.t2 { width: 1493px; }
.a0 { width: 220px; } .a1 { width: 230px; } .a2 { width: 153px; } .a3 { width: 218px; } .a4 { width: 286px; } .a5 { width: 192px; }
.b0 { width: 226px; } .b1 { width: 163px; } .b2 { width: 290px; } .b3 { width: 133px; } .b4 { width: 163px; } .b5 { width: 226px; }
.doc td, .doc th { border: 2px solid #000; padding: 0; text-align: center; vertical-align: middle; line-height: 33px; white-space: nowrap; letter-spacing: 0.280px; }
.doc td.none { border: none; }
.doc th.lab { text-align: left; padding-left: 4px; letter-spacing: 0.150px; }
.doc td.open { padding-right: 9px; }
.doc .up td, .doc .up th { padding-bottom: 2px; }
.r37 { height: 37px; } .r36 { height: 36px; } .r40 { height: 40px; }
.hd th { background: #c0c0c0; }
.cy { background: #ccffff; } .gr { background: #ccffcc; } .or { background: #ffcc99; } .pk { background: #ff99cc; }
.aqua { background: #00ffff; } .teal { background: #33cccc; } .lime { background: #99cc00; }
.tl { display: inline-block; transform: translateY(-12px); font-family: "Liberation Serif", serif; font-size: 26px; line-height: 20px; }
.rule1 { margin: 68px 0 0 5px; letter-spacing: 0.290px; white-space: nowrap; }
.eg { margin: 2px 0 0 5px; }
.t2 { margin-top: -1px; }
.h23 { margin-top: 103px; }
.li { display: flex; align-items: center; gap: 26px; padding-left: 20px; letter-spacing: 0.220px; margin-top: 1px; white-space: nowrap; }
.li i { width: 8px; height: 8px; border-radius: 50%; background: #000; }
.scroll { width: 18px; background: #f1f1f1; display: flex; flex-direction: column; align-items: center; justify-content: space-between; padding: 7px 0 5px; }
.scroll svg { width: 8px; height: 6px; }
.thumb { width: 18px; height: 30px; background: #c1c1c1; margin: 69px 0 auto; }
.watermark { position: absolute; left: 1371px; top: 773px; color: #bdbdbd; white-space: nowrap; }
.wm1 { font-size: 23.800px; line-height: 34px; }
.wm2, .wm3 { font-size: 16.850px; line-height: 25px; }

/* taskbar */
.task { grid-column: 1 / 3; display: flex; background: linear-gradient(100deg, #223940 0%, #20343f 45%, #1a2a44 75%, #192744 100%); }
.start { width: 60px; display: flex; align-items: center; justify-content: center; }
.search { width: 430px; background: #f1f1f1; border: 1px solid #b9bcbd; display: flex; align-items: center; padding-left: 14px; gap: 15px; color: #2c2c2c; font-size: 18.100px; white-space: nowrap; letter-spacing: -0.230px; padding-bottom: 1px; }
.app { width: 61px; display: flex; align-items: center; justify-content: center; flex: none; }
.app.tv { width: 65px; padding-right: 3px; }
.app.run { background: linear-gradient(#76b9ed, #76b9ed) center bottom / 50px 3px no-repeat; }
.app.on { background: linear-gradient(#76b9ed, #76b9ed) center bottom / 100% 3px no-repeat #4e6269; }
.app.multi { background: linear-gradient(90deg, #76b9ed 39px, #57809f 39px) center bottom / 50px 3px no-repeat; }
.ide { width: 30px; height: 30px; background: #2da4de; color: #fff; font: bold 15px/30px "Open Sans", sans-serif; text-align: center; letter-spacing: -0.300px; }
.tray { display: flex; align-items: center; margin-left: 9px; gap: 11px; color: #fff; }
.help { margin-right: -1px; }
.lang, .clock { font-size: 15px; line-height: 22px; text-align: center; letter-spacing: -0.500px; }
.lang { width: 30px; margin-left: 2px; }
.clock { width: 74px; margin-left: 4px; white-space: nowrap; }
.note { margin-left: 10px; }
.peek { width: 1px; height: 50px; background: #6b7687; margin-left: 12px; }
```
